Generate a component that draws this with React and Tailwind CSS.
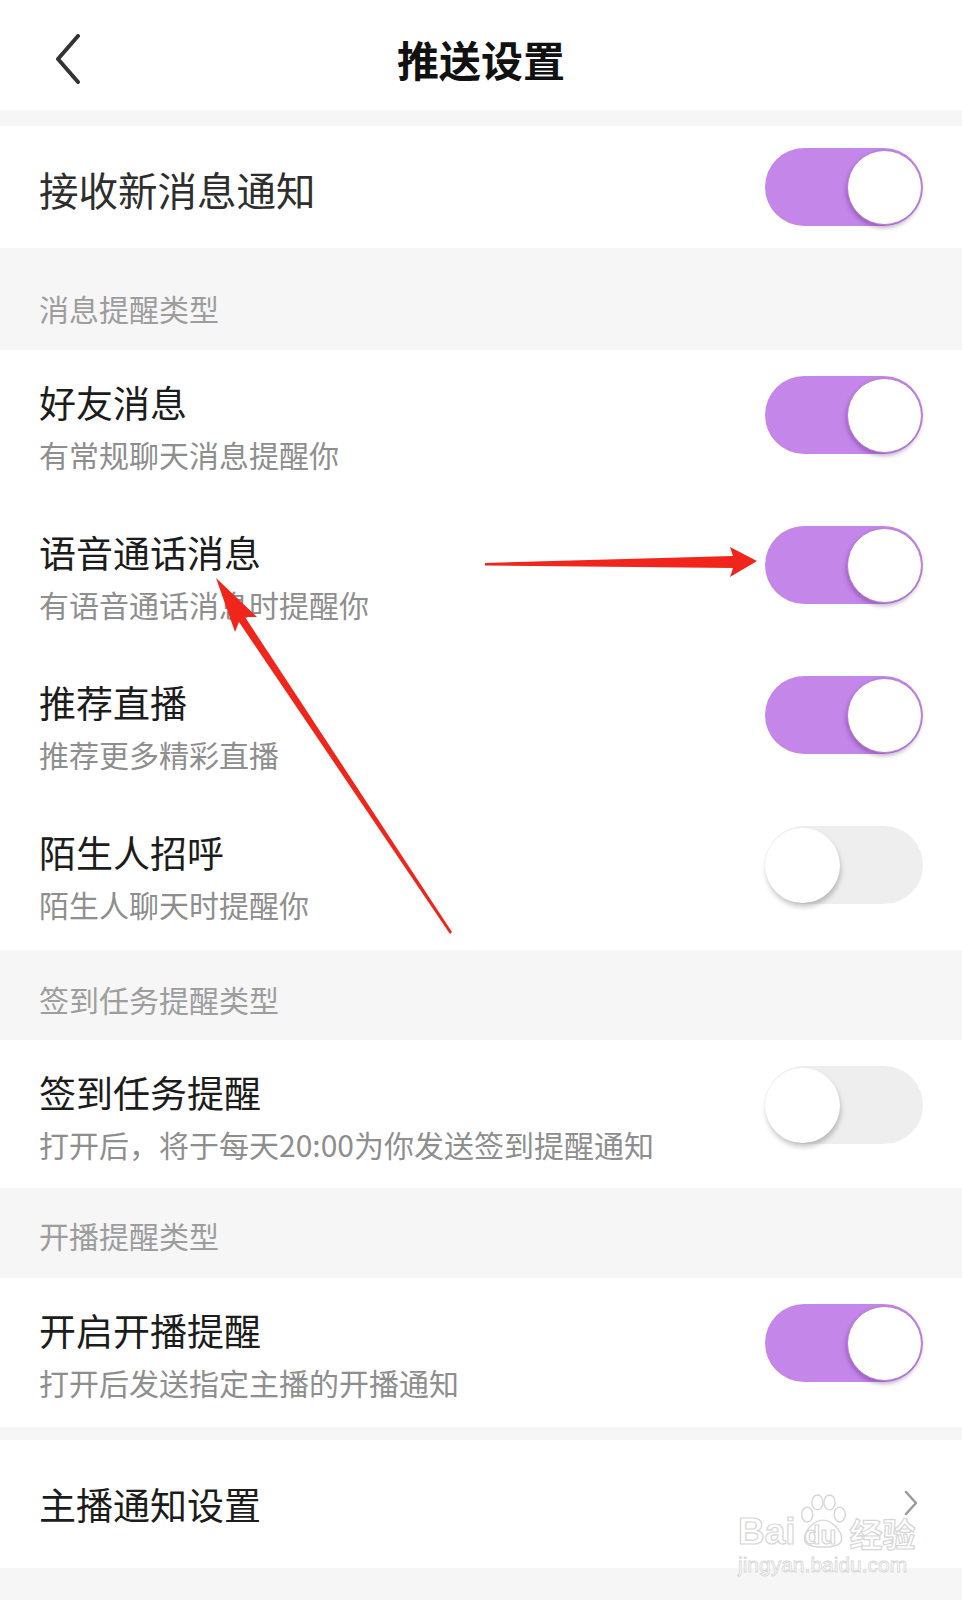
import React from "react";

function Toggle({ on }) {
  return (
    <div
      className={`flex h-[78px] w-[158px] shrink-0 items-center rounded-full ${
        on ? "justify-end bg-[#c586ea] pr-[1px]" : "justify-start bg-[#eeeeee]"
      }`}
    >
      <div
        className={`h-[75px] w-[75px] rounded-full bg-white ${
          on
            ? "border border-[#b57ad9] shadow-[-1px_3px_4px_rgba(80,30,110,0.35)]"
            : "shadow-[1px_4px_5px_rgba(0,0,0,0.22)]"
        }`}
      />
    </div>
  );
}

function SectionHeader({ title, className }) {
  return (
    <div className={`flex items-center bg-[#f6f6f6] pl-[39px] ${className}`}>
      <span className="text-[30px] leading-none text-[#9d9d9d]">{title}</span>
    </div>
  );
}

function SwitchRow({ title, desc, on, className = "h-[150px]" }) {
  return (
    <div className={`flex items-start justify-between bg-white pl-[39px] pr-[39px] ${className}`}>
      <div className="flex flex-col pt-[34px]">
        <span className="text-[37px] leading-none text-[#1c1c1c]">{title}</span>
        <span className="mt-[18px] text-[30px] leading-none text-[#8e8e8e]">{desc}</span>
      </div>
      <div className="mt-[26px]">
        <Toggle on={on} />
      </div>
    </div>
  );
}

export default function App() {
  return (
    <div className="relative w-[962px] min-h-[1600px] bg-[#f6f6f6] font-['Noto_Sans_CJK_SC','Liberation_Sans',sans-serif]">
      {/* header */}
      <div className="grid h-[110px] grid-cols-[1fr_auto_1fr] items-center bg-white pt-[8px]">
        <div className="pl-[55px]">
          <svg width="26" height="50" viewBox="0 0 26 50" fill="none">
            <polyline
              points="23,2 3,25 23,48"
              stroke="#333"
              strokeWidth="4"
              strokeLinecap="round"
              strokeLinejoin="round"
            />
          </svg>
        </div>
        <h1 className="text-[42px] font-bold leading-none text-[#111]">推送设置</h1>
        <div />
      </div>

      <div className="h-[16px]" />

      {/* main switch */}
      <div className="flex h-[122px] items-center justify-between bg-white pl-[39px] pr-[39px]">
        <span className="mt-[4px] text-[39.5px] leading-none text-[#2e2e2e]">接收新消息通知</span>
        <Toggle on />
      </div>

      <SectionHeader title="消息提醒类型" className="h-[102px] pt-[17px]" />

      <SwitchRow title="好友消息" desc="有常规聊天消息提醒你" on />
      <SwitchRow title="语音通话消息" desc="有语音通话消息时提醒你" on />
      <SwitchRow title="推荐直播" desc="推荐更多精彩直播" on />
      <SwitchRow title="陌生人招呼" desc="陌生人聊天时提醒你" on={false} />

      <SectionHeader title="签到任务提醒类型" className="h-[90px] pt-[8px]" />
      <SwitchRow
        title="签到任务提醒"
        desc="打开后，将于每天20:00为你发送签到提醒通知"
        on={false}
        className="h-[148px]"
      />

      <SectionHeader title="开播提醒类型" className="h-[90px] pt-[4px]" />
      <SwitchRow title="开启开播提醒" desc="打开后发送指定主播的开播通知" on className="h-[149px]" />

      <div className="h-[13px]" />

      {/* anchor settings */}
      <div className="relative flex h-[128px] items-start justify-between bg-white pl-[39px] pr-[44px]">
        <span className="mt-[46px] text-[37px] leading-none text-[#1c1c1c]">主播通知设置</span>
        <svg className="mt-[50px]" width="14" height="26" viewBox="0 0 14 26" fill="none">
          <polyline
            points="2,2 12,13 2,24"
            stroke="#9a9a9a"
            strokeWidth="2.5"
            strokeLinecap="round"
            strokeLinejoin="round"
          />
        </svg>

        {/* watermark */}
        <div className="pointer-events-none absolute left-[738px] top-[52px] flex flex-col items-start">
          <div className="flex items-end leading-none text-white [-webkit-text-stroke:1.2px_#d6d6d6]">
            <span className="font-['Liberation_Sans',sans-serif] text-[37px] font-bold">Bai</span>
            <span className="relative ml-[1px] h-[58px] w-[52px]">
              <svg className="absolute left-0 top-0" width="52" height="58" viewBox="0 0 56 58" fill="none" stroke="#d6d6d6" strokeWidth="1.5">
                <ellipse cx="11" cy="22" rx="6" ry="8" />
                <ellipse cx="22" cy="9" rx="6" ry="8" />
                <ellipse cx="35" cy="9" rx="6" ry="8" />
                <ellipse cx="46" cy="22" rx="6" ry="8" />
                <path d="M28 28 C18 28 8 40 8 48 C8 55 16 57 28 57 C40 57 48 55 48 48 C48 40 38 28 28 28 Z" />
              </svg>
              <span className="absolute bottom-[2px] left-[8px] font-['Liberation_Sans',sans-serif] text-[26px] font-bold">du</span>
            </span>
            <span className="ml-[1px] text-[33px] font-bold">经验</span>
          </div>
          <span className="mt-[4px] font-['Liberation_Sans',sans-serif] text-[21px] leading-none text-white [-webkit-text-stroke:0.8px_#d6d6d6]">
            jingyan.baidu.com
          </span>
        </div>
      </div>

      <div className="h-[32px]" />

      {/* red annotation arrows */}
      <svg
        className="pointer-events-none absolute left-0 top-0"
        width="962"
        height="1600"
        viewBox="0 0 962 1600"
      >
        <polygon
          fill="#f0261c"
          points="485,563 733,556 730,547 757,561 730,577 733,568 485,565.5"
        />
        <polygon
          fill="#f0261c"
          points="216,578 257,617 245,617 452,932 450,934 239,622 235,632"
        />
      </svg>
    </div>
  );
}
